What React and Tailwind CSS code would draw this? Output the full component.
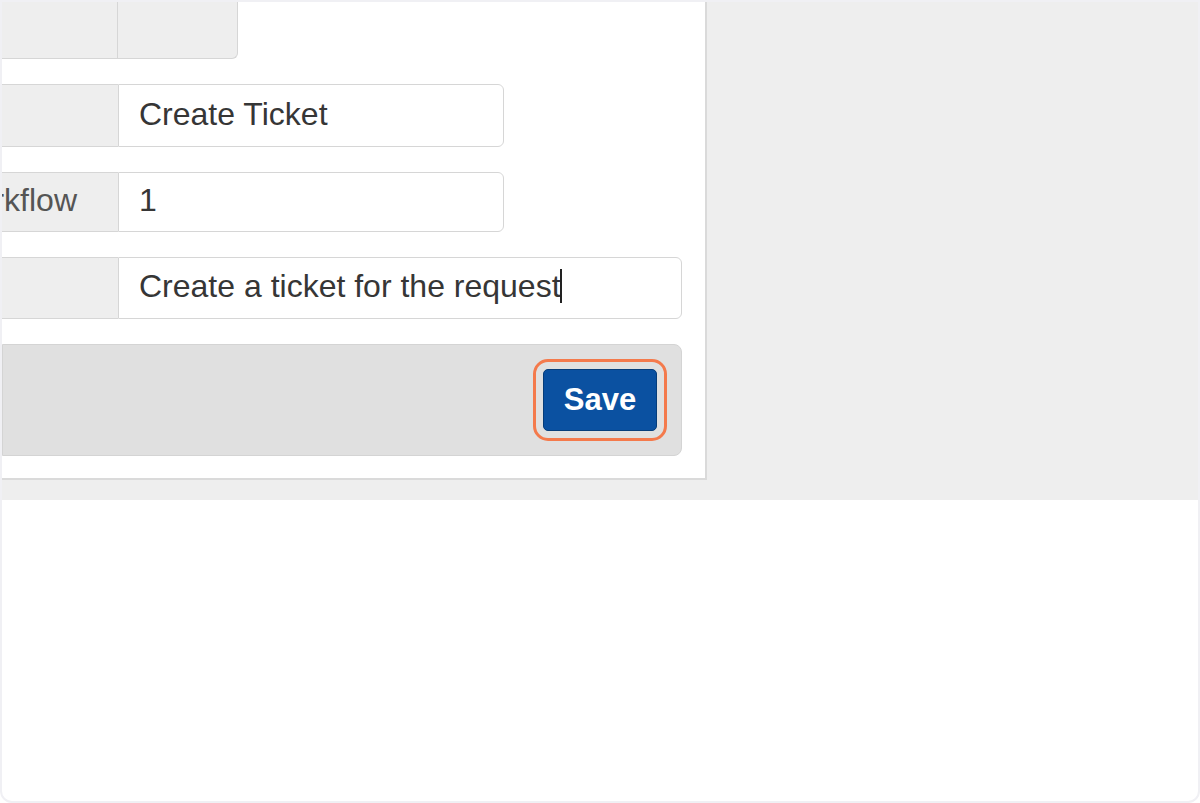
import React from 'react';

const Addon = ({ label, className = '' }) => (
  <div className={`w-[116px] shrink-0 flex items-center justify-end overflow-hidden bg-[#eeeeee] border-y border-[#d6d6d6] text-[#555555] pb-[4px] ${className}`}>
    {label && <span className="whitespace-nowrap shrink-0 pr-[41px]">{label}</span>}
  </div>
);

const Field = ({ label, value, width, height, cursor }) => (
  <div className="flex" style={{ height }}>
    <Addon label={label} />
    <div
      className="flex items-center bg-white border border-[#d6d6d6] rounded-r-[6px] pl-[20px] pb-[4px] text-[#363636]"
      style={{ width }}
    >
      <span className="whitespace-nowrap">{value}</span>
      {cursor && <span className="inline-block w-[2px] h-[34px] bg-[#222] ml-[-1px]" />}
    </div>
  </div>
);

export default function App() {
  return (
    <div className="w-[1200px] h-[803px] bg-white border-2 border-[#f0f0f4] rounded-b-[12px] overflow-hidden font-['Liberation_Sans',Arial,sans-serif] text-[32px]">
      <div className="h-[498px] bg-[#eeeeee] flex items-start">
        <div className="w-[705px] h-[478px] bg-white border-r-2 border-b-2 border-[#dadada] flex flex-col">
          <div className="flex h-[57px]">
            <div className="w-[116px] bg-[#eeeeee] border-b border-r border-[#d6d6d6]" />
            <div className="w-[120px] bg-[#eeeeee] border-b border-r border-[#d6d6d6] rounded-br-[6px]" />
          </div>

          <div className="flex flex-col gap-[25px] mt-[25px]">
            <Field value="Create Ticket" width={386} height={63} />
            <Field label="Workflow" value="1" width={386} height={60} />
            <Field value="Create a ticket for the request" width={564} height={62} cursor />

            <div className="w-[680px] h-[112px] bg-[#e0e0e0] border border-[#d4d4d4] rounded-r-[8px] flex items-center justify-end pr-[24px]">
              <button className="w-[114px] h-[62px] bg-[#0b51a1] border border-[#063d7a] rounded-[5px] text-white font-bold text-[31px] outline-[3px] outline-solid outline-[#f47a4c] outline-offset-[7px]">
                Save
              </button>
            </div>
          </div>
        </div>
      </div>
    </div>
  );
}
